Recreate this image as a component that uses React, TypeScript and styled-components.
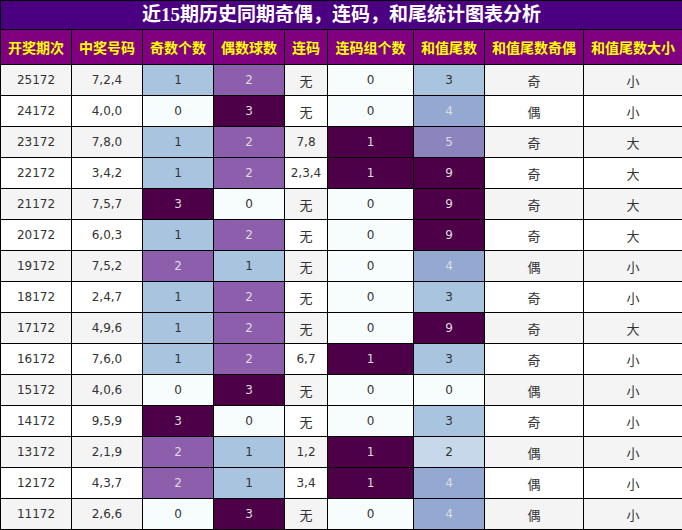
import React from "react";
import styled, { createGlobalStyle } from "styled-components";

const Global = createGlobalStyle`
  html, body { margin: 0; padding: 0; background: #fff; }
`;

type Row = [string, string, number, number, string, number, number, string, string];

const rows: Row[] = [
  ["25172", "7,2,4", 1, 2, "无", 0, 3, "奇", "小"],
  ["24172", "4,0,0", 0, 3, "无", 0, 4, "偶", "小"],
  ["23172", "7,8,0", 1, 2, "7,8", 1, 5, "奇", "大"],
  ["22172", "3,4,2", 1, 2, "2,3,4", 1, 9, "奇", "大"],
  ["21172", "7,5,7", 3, 0, "无", 0, 9, "奇", "大"],
  ["20172", "6,0,3", 1, 2, "无", 0, 9, "奇", "大"],
  ["19172", "7,5,2", 2, 1, "无", 0, 4, "偶", "小"],
  ["18172", "2,4,7", 1, 2, "无", 0, 3, "奇", "小"],
  ["17172", "4,9,6", 1, 2, "无", 0, 9, "奇", "大"],
  ["16172", "7,6,0", 1, 2, "6,7", 1, 3, "奇", "小"],
  ["15172", "4,0,6", 0, 3, "无", 0, 0, "偶", "小"],
  ["14172", "9,5,9", 3, 0, "无", 0, 3, "奇", "小"],
  ["13172", "2,1,9", 2, 1, "1,2", 1, 2, "偶", "小"],
  ["12172", "4,3,7", 2, 1, "3,4", 1, 4, "偶", "小"],
  ["11172", "2,6,6", 0, 3, "无", 0, 4, "偶", "小"],
];

const countColors: Record<number, string> = {
  0: "#f7fcfd",
  1: "#a8c4df",
  2: "#8c5eab",
  3: "#4d0048",
};

const groupColors: Record<number, string> = {
  0: "#f7fcfd",
  1: "#4d0048",
};

const tailColors: Record<number, string> = {
  0: "#f7fcfd",
  2: "#c6d8e9",
  3: "#a8c4df",
  4: "#93a9d1",
  5: "#8c84bd",
  9: "#4d0048",
};

const darkText = (bg: string) => !["#f7fcfd", "#a8c4df", "#c6d8e9"].includes(bg);

const headers = ["开奖期次", "中奖号码", "奇数个数", "偶数球数", "连码", "连码组个数", "和值尾数", "和值尾数奇偶", "和值尾数大小"];
const widths = [71, 71, 71, 71, 43, 86, 71, 99, 99];

const Table = styled.table`
  border-collapse: collapse;
  table-layout: fixed;
  width: 682px;
`;

const TitleCell = styled.th`
  background: #4b0082;
  color: #fff;
  height: 28px;
  padding: 0;
  border: 1px solid #000;
  font-family: "Liberation Serif", "Noto Sans CJK SC", serif;
  font-weight: bold;
  font-size: 19px;
  line-height: 28px;
  text-align: center;
`;

const HeadCell = styled.th`
  background: #800080;
  color: #ffff00;
  height: 34px;
  padding: 0;
  border: 1px solid #000;
  font-family: "Noto Sans CJK SC", sans-serif;
  font-weight: bold;
  font-size: 14px;
  text-align: center;
  white-space: nowrap;
`;

const BodyRow = styled.tr<{ $alt: boolean }>`
  background: ${(p) => (p.$alt ? "#f4f4f4" : "#ffffff")};
`;

const Cell = styled.td<{ $bg?: string; $light?: boolean; $cjk?: boolean }>`
  height: 30px;
  padding: 0;
  border: 1px solid #000;
  text-align: center;
  background: ${(p) => p.$bg ?? "transparent"};
  color: ${(p) => (p.$light ? "#dcdcdc" : "#333")};
  font-family: ${(p) =>
    p.$cjk ? `"Noto Sans CJK SC", sans-serif` : `"DejaVu Sans", "Noto Sans CJK SC", sans-serif`};
  font-size: ${(p) => (p.$cjk ? "13px" : "12px")};
`;

export default function App() {
  return (
    <>
      <Global />
      <Table>
        <colgroup>
          {widths.map((w, i) => (
            <col key={i} style={{ width: w }} />
          ))}
        </colgroup>
        <thead>
          <tr>
            <TitleCell colSpan={9}>近15期历史同期奇偶，连码，和尾统计图表分析</TitleCell>
          </tr>
          <tr>
            {headers.map((h) => (
              <HeadCell key={h}>{h}</HeadCell>
            ))}
          </tr>
        </thead>
        <tbody>
          {rows.map((r, i) => {
            const oddBg = countColors[r[2]];
            const evenBg = countColors[r[3]];
            const grpBg = groupColors[r[5]];
            const tailBg = tailColors[r[6]];
            return (
              <BodyRow key={r[0]} $alt={i % 2 === 0}>
                <Cell>{r[0]}</Cell>
                <Cell>{r[1]}</Cell>
                <Cell $bg={oddBg} $light={darkText(oddBg)}>{r[2]}</Cell>
                <Cell $bg={evenBg} $light={darkText(evenBg)}>{r[3]}</Cell>
                <Cell $cjk={r[4] === "无"}>{r[4]}</Cell>
                <Cell $bg={grpBg} $light={darkText(grpBg)}>{r[5]}</Cell>
                <Cell $bg={tailBg} $light={darkText(tailBg)}>{r[6]}</Cell>
                <Cell $cjk>{r[7]}</Cell>
                <Cell $cjk>{r[8]}</Cell>
              </BodyRow>
            );
          })}
        </tbody>
      </Table>
    </>
  );
}
